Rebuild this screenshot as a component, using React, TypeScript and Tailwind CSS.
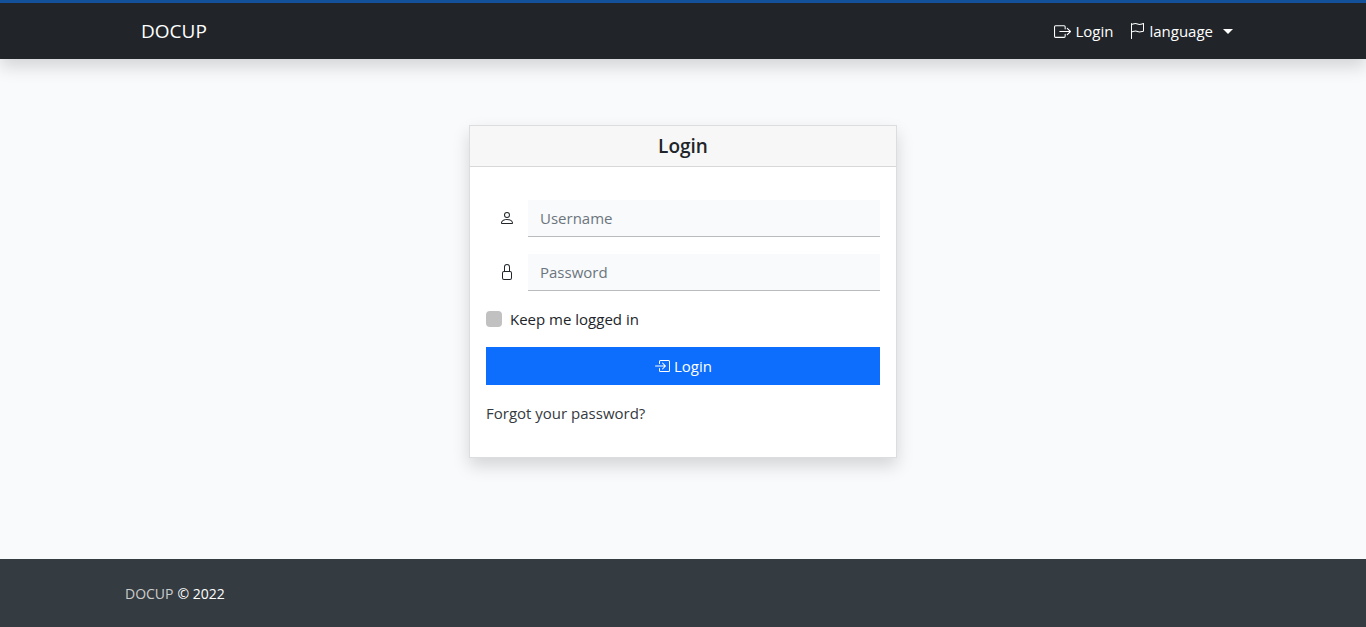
import React from 'react';
import { BsBoxArrowInRight, BsBoxArrowRight, BsFlag, BsLock, BsPerson } from 'react-icons/bs';

interface FieldProps {
  id: string;
  label: string;
  type: string;
  icon: React.ReactNode;
}

const Field: React.FC<FieldProps> = ({ id, label, type, icon }) => (
  <div className="flex mb-[17px]">
    <label htmlFor={id} aria-label={label} className="w-[42px] h-9 flex items-center justify-center text-[#212529]">
      {icon}
    </label>
    <input
      id={id}
      type={type}
      placeholder={label}
      className="flex-1 min-w-0 h-[37px] px-3 text-[15px] bg-[#f8fafc] text-[#212529] placeholder:text-[#6c757d] border-b border-[#b9bcbf] outline-none focus:border-[#0d6efd]"
    />
  </div>
);

const Navbar: React.FC = () => (
  <header className="relative bg-[#212529] border-t-3 border-[#12509a] shadow-[0_8px_16px_rgba(0,0,0,0.15)]">
    <nav className="max-w-[1140px] h-14 mx-auto pl-7 pr-5 flex items-center justify-between text-white">
      <a href="#" className="text-[19px] leading-7">DOCUP</a>
      <div className="flex items-center gap-4">
        <a href="#" className="flex items-center gap-1">
          <BsBoxArrowRight size={17} />
          Login
        </a>
        <button type="button" className="flex items-center gap-1">
          <BsFlag size={16} />
          language
          <span className="ml-1.5 border-x-5 border-t-5 border-x-transparent border-t-white" />
        </button>
      </div>
    </nav>
  </header>
);

const LoginCard: React.FC = () => (
  <section className="w-full max-w-[428px] bg-white border border-[#dcdddf] shadow-[0_8px_16px_rgba(0,0,0,0.15)]">
    <h1 className="h-[41px] flex items-center justify-center bg-[#f7f7f7] border-b border-[#d8d8d8] text-[19px] font-semibold">
      Login
    </h1>
    <form className="px-4 pt-[33px] pb-8" onSubmit={(e) => e.preventDefault()}>
      <Field id="username" label="Username" type="text" icon={<BsPerson size={16} />} />
      <Field id="password" label="Password" type="password" icon={<BsLock size={16} />} />
      <label className="flex items-center gap-2 h-[22px] mb-[17px]">
        <input type="checkbox" className="size-4 appearance-none rounded-sm bg-[#c1c1c1] checked:bg-[#0d6efd]" />
        Keep me logged in
      </label>
      <button
        type="submit"
        className="w-full h-[38px] mb-4 flex items-center justify-center gap-1 bg-[#0d6efd] text-white hover:bg-[#0b5ed7]"
      >
        <BsBoxArrowInRight size={16} />
        Login
      </button>
      <a href="#" className="block h-6 text-[#343a40]">Forgot your password?</a>
    </form>
  </section>
);

export default function App() {
  return (
    <div className="min-h-screen flex flex-col bg-[#f8fafc] text-[#212529] text-[15px] leading-6 font-['Segoe_UI','Open_Sans',sans-serif]">
      <Navbar />
      <main className="flex-1 flex justify-center items-start px-4 pt-[66px] pb-16">
        <LoginCard />
      </main>
      <footer className="bg-[#343b41] text-white">
        <div className="max-w-[1140px] h-[68px] mx-auto px-3 pt-px flex items-center gap-1 text-sm">
          <a href="#" className="text-[#cccccc]">DOCUP</a>
          <span>© 2022</span>
        </div>
      </footer>
    </div>
  );
}
